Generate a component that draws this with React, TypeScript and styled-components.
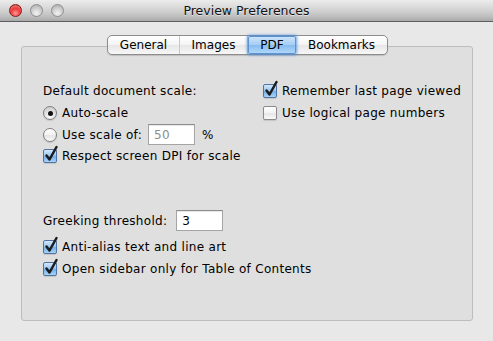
import React from "react";
import styled, { createGlobalStyle, css } from "styled-components";

const GlobalStyle = createGlobalStyle`
  html, body { margin: 0; padding: 0; }
  body { background: #e8e8e8; font-family: "DejaVu Sans", "Lucida Grande", sans-serif; }
`;

const Window = styled.div`
  width: 493px;
  height: 341px;
  background: #e8e8e8;
  display: flex;
  flex-direction: column;
  font-family: "DejaVu Sans", sans-serif;
  font-size: 12px;
  color: #000;
  overflow: hidden;
`;

const TitleBar = styled.div`
  height: 21px;
  border-bottom: 1px solid #5e5e5e;
  background: linear-gradient(#ececec, #d2d2d2 50%, #bdbdbd 80%, #a9a9a9);
  display: grid;
  grid-template-columns: 1fr auto 1fr;
  align-items: center;
`;

const Lights = styled.div`
  display: flex;
  gap: 8px;
  padding-left: 9px;
`;

const Light = styled.span<{ $red?: boolean }>`
  width: 13px;
  height: 13px;
  border-radius: 50%;
  box-sizing: border-box;
  ${(p) =>
    p.$red
      ? css`
          border: 1px solid #8d1a1a;
          background: radial-gradient(circle at 50% 75%, #ff9a9a 0%, #f03a3a 45%, #b40e0e 100%);
          box-shadow: inset 0 2px 2px rgba(255, 255, 255, 0.35);
        `
      : css`
          border: 1px solid #8e8e8e;
          background: radial-gradient(circle at 50% 75%, #f2f2f2 0%, #cfcfcf 50%, #a6a6a6 100%);
        `}
`;

const Title = styled.div`
  font-size: 12.5px;
  color: #111;
  text-shadow: 0 1px 0 rgba(255, 255, 255, 0.5);
`;

const Body = styled.div`
  display: flex;
  flex-direction: column;
  padding-top: 13px;
`;

const Tabs = styled.div`
  align-self: center;
  margin-left: 2px;
  position: relative;
  z-index: 1;
  display: flex;
  height: 18px;
  border: 1px solid #8c8c8c;
  border-radius: 5px;
  background: linear-gradient(#ffffff, #f4f4f4 50%, #e6e6e6 51%, #f7f7f7);
  box-shadow: 0 1px 1px rgba(0, 0, 0, 0.15);
  margin-bottom: -9px;
`;

const Tab = styled.div<{ $w: number; $active?: boolean; $last?: boolean }>`
  width: ${(p) => p.$w}px;
  display: flex;
  align-items: center;
  justify-content: center;
  font-size: 12px;
  border-right: ${(p) => (p.$last ? "none" : "1px solid #c8c8c8")};
  ${(p) =>
    p.$active &&
    css`
      background: linear-gradient(#cfe5fb, #a5cdf3 50%, #86bcf0 51%, #b5dafa);
      box-shadow: 0 0 3px 1px rgba(70, 140, 230, 0.8), inset 0 0 0 1px #5d93d1;
      border-right: none;
      border-radius: 2px;
    `}
`;

const Panel = styled.div`
  margin: 0 20px 0 21px;
  height: 275px;
  box-sizing: border-box;
  border: 1px solid #bdbdbd;
  border-radius: 3px;
  background: #dfdfdf;
  padding: 33px 0 0 21px;
  display: flex;
  flex-direction: column;
  letter-spacing: 0.3px;
`;

const Columns = styled.div`
  display: grid;
  grid-template-columns: 220px 1fr;
`;

const Column = styled.div`
  display: flex;
  flex-direction: column;
`;

const Row = styled.div<{ $h?: number }>`
  height: ${(p) => p.$h ?? 22}px;
  display: flex;
  align-items: center;
  white-space: nowrap;
`;

const Lower = styled.div`
  margin-top: 43px;
  display: flex;
  flex-direction: column;
`;

const Control = styled.label`
  display: flex;
  align-items: center;
  gap: 5px;
`;

const BoxWrap = styled.span`
  position: relative;
  width: 14px;
  height: 14px;
  flex: none;
`;

const Box = styled.span<{ $checked?: boolean }>`
  display: block;
  width: 14px;
  height: 14px;
  box-sizing: border-box;
  border-radius: 2px;
  ${(p) =>
    p.$checked
      ? css`
          border: 1px solid #4f74a3;
          background: linear-gradient(#d6e8fb, #9ac8f2 45%, #72afea 55%, #a9d4f8);
        `
      : css`
          border: 1px solid #8a8a8a;
          background: linear-gradient(#ffffff, #f3f3f3 50%, #e6e6e6 55%, #fafafa);
        `}
  box-shadow: 0 1px 1px rgba(0, 0, 0, 0.12);
`;

const Tick = styled.svg`
  position: absolute;
  left: 1px;
  top: -3px;
  overflow: visible;
`;

const Radio = styled.span<{ $checked?: boolean }>`
  width: 14px;
  height: 14px;
  flex: none;
  box-sizing: border-box;
  border-radius: 50%;
  border: 1px solid #7f7f7f;
  display: flex;
  align-items: center;
  justify-content: center;
  background: ${(p) =>
    p.$checked
      ? "radial-gradient(circle at 50% 80%, #ffffff 0%, #e0e0e0 50%, #c4c4c4 100%)"
      : "linear-gradient(#ffffff, #f2f2f2 50%, #e4e4e4 55%, #fbfbfb)"};
  box-shadow: 0 1px 1px rgba(0, 0, 0, 0.12);
  &::after {
    content: "";
    display: ${(p) => (p.$checked ? "block" : "none")};
    width: 5px;
    height: 5px;
    border-radius: 50%;
    background: #111;
  }
`;

const Field = styled.div<{ $disabled?: boolean }>`
  width: 47px;
  height: 21px;
  box-sizing: border-box;
  border: 1px solid #a5a5a5;
  border-top-color: #8c8c8c;
  background: #fff;
  display: flex;
  align-items: center;
  padding-left: 5px;
  color: ${(p) => (p.$disabled ? "#8c8c8c" : "#000")};
  box-shadow: inset 0 1px 1px rgba(0, 0, 0, 0.1);
`;

const Label = styled.span<{ $gap?: number; $lead?: number }>`
  margin-right: ${(p) => p.$gap ?? 0}px;
  margin-left: ${(p) => p.$lead ?? 0}px;
`;

function Checkbox({ checked, children }: { checked?: boolean; children: React.ReactNode }) {
  return (
    <Control>
      <BoxWrap>
        <Box $checked={checked} />
        {checked && (
          <Tick width="14" height="16" viewBox="0 0 14 16">
            <path
              d="M2.5 9.5 L5.5 13.5 L12.5 1"
              fill="none"
              stroke="#1c1c1c"
              strokeWidth="2.5"
              strokeLinecap="round"
              strokeLinejoin="round"
            />
          </Tick>
        )}
      </BoxWrap>
      <span>{children}</span>
    </Control>
  );
}

export default function App() {
  return (
    <>
      <GlobalStyle />
      <Window>
        <TitleBar>
          <Lights>
            <Light $red />
            <Light />
            <Light />
          </Lights>
          <Title>Preview Preferences</Title>
          <span />
        </TitleBar>
        <Body>
          <Tabs>
            <Tab $w={71}>General</Tab>
            <Tab $w={67}>Images</Tab>
            <Tab $w={48} $active>
              PDF
            </Tab>
            <Tab $w={91} $last>
              Bookmarks
            </Tab>
          </Tabs>
          <Panel>
            <Columns>
              <Column>
                <Row>Default document scale:</Row>
                <Row>
                  <Control>
                    <Radio $checked />
                    <span>Auto-scale</span>
                  </Control>
                </Row>
                <Row $h={21}>
                  <Control>
                    <Radio />
                    <Label $gap={6}>Use scale of:</Label>
                  </Control>
                  <Field $disabled>50</Field>
                  <Label $lead={7}>%</Label>
                </Row>
                <Row>
                  <Checkbox checked>Respect screen DPI for scale</Checkbox>
                </Row>
              </Column>
              <Column>
                <Row>
                  <Checkbox checked>Remember last page viewed</Checkbox>
                </Row>
                <Row>
                  <Checkbox>Use logical page numbers</Checkbox>
                </Row>
              </Column>
            </Columns>
            <Lower>
              <Row $h={21}>
                <Label $gap={9}>Greeking threshold:</Label>
                <Field>3</Field>
              </Row>
              <Row style={{ marginTop: 5 }}>
                <Checkbox checked>Anti-alias text and line art</Checkbox>
              </Row>
              <Row>
                <Checkbox checked>Open sidebar only for Table of Contents</Checkbox>
              </Row>
            </Lower>
          </Panel>
        </Body>
      </Window>
    </>
  );
}
